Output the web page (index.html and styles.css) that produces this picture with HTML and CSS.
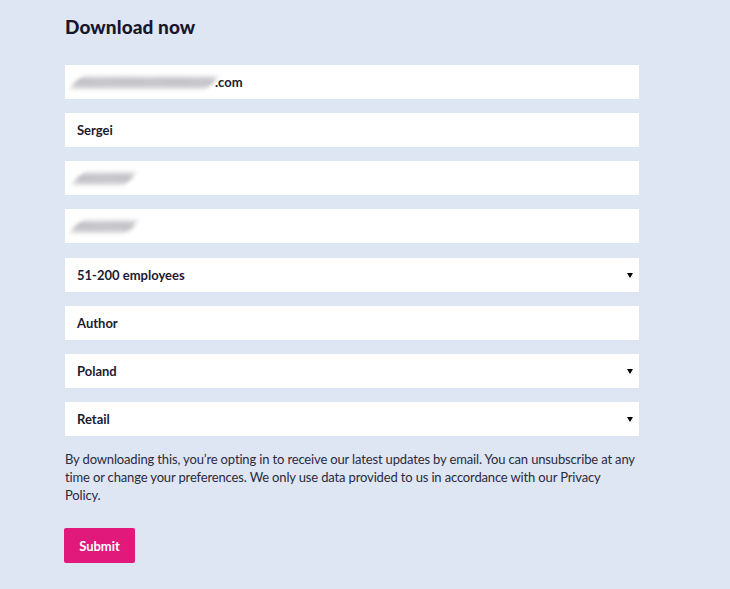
FILE: index.html
```html
<!DOCTYPE html>
<html lang="en">
<head>
<meta charset="utf-8">
<title>Download now</title>
<link rel="stylesheet" href="styles.css">
</head>
<body>
<main class="page">
  <h2 class="title">Download now</h2>
  <form class="form">
    <div class="field"><span class="blur blur-long"></span><span class="val">.com</span></div>
    <div class="field"><span class="val">Sergei</span></div>
    <div class="field"><span class="blur blur-short"></span></div>
    <div class="field"><span class="blur blur-short2"></span></div>
    <div class="field select"><span class="val">51-200 employees</span><span class="caret"></span></div>
    <div class="field"><span class="val">Author</span></div>
    <div class="field select"><span class="val">Poland</span><span class="caret"></span></div>
    <div class="field select"><span class="val">Retail</span><span class="caret"></span></div>
    <p class="note">By downloading this, you’re opting in to receive our latest updates by email. You can unsubscribe at any time or change your preferences. We only use data provided to us in accordance with our Privacy<br>Policy.</p>
    <div class="actions"><button type="button" class="submit">Submit</button></div>
  </form>
</main>
</body>
</html>
```
FILE: styles.css
```css
* { box-sizing: border-box; }
html, body { margin: 0; padding: 0; }
body {
  background: #dfe6f3;
  font-family: "Lato", "Liberation Sans", sans-serif;
  color: #1b1b33;
  width: 730px;
  height: 589px;
  overflow: hidden;
}
.page {
  padding: 15px 91px 0 65px;
}
.title {
  margin: 0;
  font-size: 19px;
  font-weight: 900;
  line-height: 24px;
  letter-spacing: 0.1px;
  color: #16162c;
}
.form {
  margin-top: 26px;
  display: flex;
  flex-direction: column;
  gap: 14.15px;
  width: 574px;
}
.field {
  height: 34px;
  background: #ffffff;
  display: flex;
  align-items: center;
  padding: 0 12px;
  font-size: 13px;
  font-weight: 700;
  color: #1b1b33;
  position: relative;
}
.val { line-height: 16px; }
.blur {
  display: inline-block;
  height: 11px;
  filter: blur(2.4px);
  background: repeating-linear-gradient(120deg, #9a9aa0 0 2px, #cfcfd4 2px 6px);
  transform: skewX(-35deg);
  border-radius: 5px;
}
.blur-long { width: 140px; margin-left: -3px; margin-right: 1px; opacity: 0.9; }
.blur-short { width: 56px; margin-left: -1px; opacity: 0.9; }
.blur-short2 { width: 60px; margin-left: -3px; opacity: 0.9; }
.caret {
  position: absolute;
  right: 6px;
  top: 15px;
  width: 0;
  height: 0;
  border-left: 3.5px solid transparent;
  border-right: 3.5px solid transparent;
  border-top: 5px solid #000;
}
.note {
  margin: 0;
  font-size: 13px;
  font-weight: 400;
  line-height: 18px;
  letter-spacing: -0.15px;
  color: #2a2a3e;
}
.actions { margin-top: 10px; }
.submit {
  border: none;
  background: #e0197a;
  color: #ffffff;
  font-family: inherit;
  font-weight: 700;
  font-size: 13px;
  width: 71px;
  height: 35px;
  border-radius: 2px;
  padding: 0;
  margin-left: -1px;
  cursor: pointer;
}
```
